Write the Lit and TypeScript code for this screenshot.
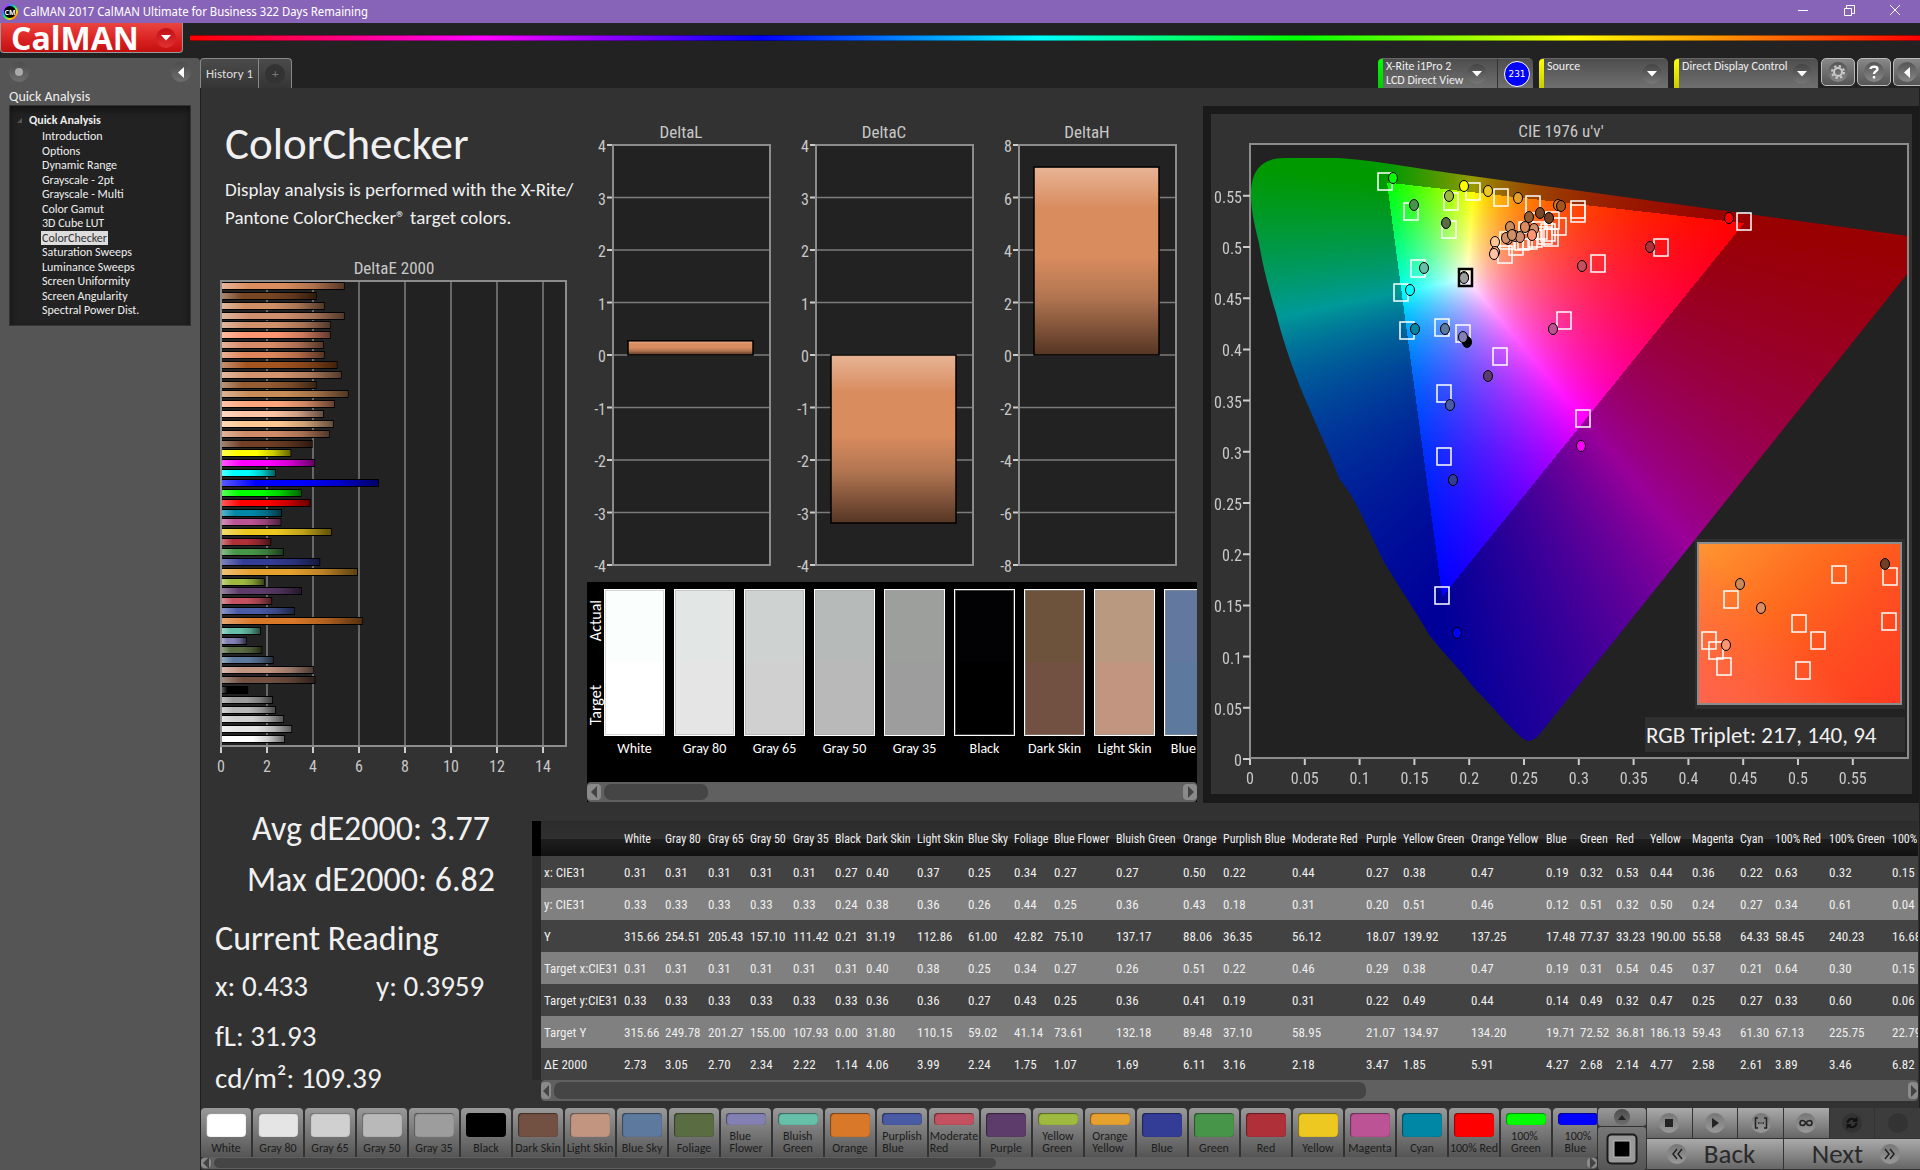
import { LitElement, html, svg, css } from "lit";
import { customElement, query } from "lit/decorators.js";

type Swatch = { name: string; color: string; actual?: string; short?: boolean };

const PATCHES: Swatch[] = [
  { name: "White", color: "#ffffff", actual: "#fafffe" },
  { name: "Gray 80", color: "#e5e5e5", actual: "#e2e6e4" },
  { name: "Gray 65", color: "#d0d0d0", actual: "#ced2d0" },
  { name: "Gray 50", color: "#b9b9b9", actual: "#b6bbb9" },
  { name: "Gray 35", color: "#9d9d9d", actual: "#9d9f9d" },
  { name: "Black", color: "#000000", actual: "#020204" },
  { name: "Dark Skin", color: "#735142", actual: "#6d533c" },
  { name: "Light Skin", color: "#c29580", actual: "#b99a80" },
  { name: "Blue Sky", color: "#5d7a9e", actual: "#63789f" },
  { name: "Foliage", color: "#5a6c42" },
  { name: "Blue Flower", color: "#8380b4", short: true },
  { name: "Bluish Green", color: "#65bfa9", short: true },
  { name: "Orange", color: "#d97829" },
  { name: "Purplish Blue", color: "#4a5ba6", short: true },
  { name: "Moderate Red", color: "#c35160", short: true },
  { name: "Purple", color: "#5d3b6b" },
  { name: "Yellow Green", color: "#9ebb3f", short: true },
  { name: "Orange Yellow", color: "#e7a12f", short: true },
  { name: "Blue", color: "#333d96" },
  { name: "Green", color: "#479548" },
  { name: "Red", color: "#b03039" },
  { name: "Yellow", color: "#edc821" },
  { name: "Magenta", color: "#bc5395" },
  { name: "Cyan", color: "#0087a6" },
  { name: "100% Red", color: "#ff0000" },
  { name: "100% Green", color: "#00ff00", short: true },
  { name: "100% Blue", color: "#0000ff", short: true },
];

const COL_WIDTHS = [80, 41, 43, 42, 43, 42, 31, 51, 51, 46, 40, 62, 67, 40, 69, 74, 37, 68, 75, 34, 36, 34, 42, 48, 35, 54, 63, 70];
const TABLE_WIDTH = COL_WIDTHS.reduce((a, b) => a + b, 0);

const ROWS: [string, string][] = [
  ["x: CIE31", "0.31 0.31 0.31 0.31 0.31 0.27 0.40 0.37 0.25 0.34 0.27 0.27 0.50 0.22 0.44 0.27 0.38 0.47 0.19 0.32 0.53 0.44 0.36 0.22 0.63 0.32 0.15"],
  ["y: CIE31", "0.33 0.33 0.33 0.33 0.33 0.24 0.38 0.36 0.26 0.44 0.25 0.36 0.43 0.18 0.31 0.20 0.51 0.46 0.12 0.51 0.32 0.50 0.24 0.27 0.34 0.61 0.04"],
  ["Y", "315.66 254.51 205.43 157.10 111.42 0.21 31.19 112.86 61.00 42.82 75.10 137.17 88.06 36.35 56.12 18.07 139.92 137.25 17.48 77.37 33.23 190.00 55.58 64.33 58.45 240.23 16.68"],
  ["Target x:CIE31", "0.31 0.31 0.31 0.31 0.31 0.31 0.40 0.38 0.25 0.34 0.27 0.26 0.51 0.22 0.46 0.29 0.38 0.47 0.19 0.31 0.54 0.45 0.37 0.21 0.64 0.30 0.15"],
  ["Target y:CIE31", "0.33 0.33 0.33 0.33 0.33 0.33 0.36 0.36 0.27 0.43 0.25 0.36 0.41 0.19 0.31 0.22 0.49 0.44 0.14 0.49 0.32 0.47 0.25 0.27 0.33 0.60 0.06"],
  ["Target Y", "315.66 249.78 201.27 155.00 107.93 0.00 31.80 110.15 59.02 41.14 73.61 132.18 89.48 37.10 58.95 21.07 134.97 134.20 19.71 72.52 36.81 186.13 59.43 61.30 67.13 225.75 22.79"],
  ["ΔE 2000", "2.73 3.05 2.70 2.34 2.22 1.14 4.06 3.99 2.24 1.75 1.07 1.69 6.11 3.16 2.18 3.47 1.85 5.91 4.27 2.68 2.14 4.77 2.58 2.61 3.89 3.46 6.82"],
];

const NAV = ["Introduction", "Options", "Dynamic Range", "Grayscale - 2pt", "Grayscale - Multi", "Color Gamut", "3D Cube LUT", "ColorChecker", "Saturation Sweeps", "Luminance Sweeps", "Screen Uniformity", "Screen Angularity", "Spectral Power Dist."];

const BARS: [number, string][] = [
  [5.33, "#db8d60"], [4.11, "#784624"], [4.46, "#cf9068"], [5.33, "#cf8f6e"], [4.72, "#d0906c"], [4.72, "#ff9672"],
  [4.42, "#d68a68"], [4.46, "#dd865c"], [5.02, "#a3541f"], [5.2, "#d4946f"], [4.11, "#945c32"], [5.5, "#c88c58"],
  [4.9, "#ffa67c"], [4.42, "#ffc6a6"], [4.85, "#ffc893"], [4.68, "#d08c68"], [3.94, "#703f26"], [3.01, "#ffff00"],
  [4.05, "#ff00ff"], [2.33, "#00ffff"], [6.82, "#0000ff"], [3.46, "#00ff00"], [3.85, "#ff0000"], [2.61, "#0087a6"],
  [2.58, "#bc5395"], [4.77, "#edc821"], [2.14, "#b03039"], [2.68, "#479548"], [4.27, "#333d96"], [5.91, "#e7a12f"],
  [1.85, "#9ebb3f"], [3.47, "#5d3b6b"], [2.18, "#c35160"], [3.16, "#4a5ba6"], [6.11, "#d97829"], [1.69, "#65bfa9"],
  [1.07, "#8380b4"], [1.75, "#5a6c42"], [2.24, "#5d7a9e"], [3.99, "#c29580"], [4.06, "#735142"], [1.14, "#000000"],
  [2.22, "#9d9d9d"], [2.34, "#b9b9b9"], [2.7, "#d0d0d0"], [3.05, "#e5e5e5"], [2.73, "#ffffff"],
];

const TARGETS: [number, number][] = [
  [1385, 181], [1473, 191], [1501, 197], [1451, 201], [1411, 211], [1449, 229], [1418, 268], [1401, 292], [1407, 330],
  [1442, 327], [1463, 333], [1500, 356], [1444, 393], [1444, 456], [1583, 418], [1564, 320], [1598, 263], [1661, 247],
  [1744, 221], [1442, 595], [1533, 204], [1578, 209], [1578, 213], [1559, 226], [1552, 220], [1551, 237], [1548, 232],
  [1545, 235], [1540, 230], [1535, 238], [1530, 240], [1525, 240], [1522, 241], [1516, 246], [1507, 240], [1505, 254], [1526, 230],
];

const READINGS: [number, number, string][] = [
  [1393, 178, "#00ff00"], [1464, 186, "#ffff00"], [1488, 191, "#edc821"], [1449, 196, "#9ebb3f"], [1414, 205, "#479548"],
  [1446, 223, "#5a6c42"], [1518, 198, "#e7a12f"], [1558, 205, "#d97829"], [1561, 206, "#a3541f"], [1529, 217, "#945c32"],
  [1540, 213, "#784624"], [1549, 218, "#703f26"], [1510, 227, "#c88c58"], [1534, 229, "#d0906c"], [1525, 227, "#db8d60"],
  [1532, 235, "#ff9672"], [1508, 239, "#d68a68"], [1506, 238, "#cf9068"], [1515, 236, "#d4946f"], [1520, 237, "#cf8f6e"],
  [1512, 235, "#cf9068"], [1495, 242, "#ffc893"], [1495, 252, "#ffa67c"], [1494, 254, "#ffc6a6"], [1582, 266, "#c35160"],
  [1650, 247, "#b03039"], [1729, 218, "#ff0000"], [1424, 268, "#65bfa9"], [1410, 290, "#00ffff"], [1415, 329, "#0087a6"],
  [1445, 329, "#5d7a9e"], [1467, 342, "#000000"], [1463, 337, "#8380b4"], [1488, 376, "#5d3b6b"], [1553, 329, "#bc5395"],
  [1450, 405, "#4a5ba6"], [1453, 480, "#333d96"], [1581, 446, "#ff00ff"], [1457, 633, "#0000ff"], [1464, 277, "#b9b9b9"], [1464, 278, "#9d9d9d"],
];

const INSET_TARGETS: [number, number][] = [
  [1839, 574], [1890, 576], [1731, 599], [1799, 623], [1818, 640], [1889, 621], [1709, 640], [1716, 650], [1724, 666], [1803, 670],
];
const INSET_READINGS: [number, number, string][] = [
  [1885, 564, "#703f26"], [1740, 584, "#c88c58"], [1761, 608, "#db8d60"], [1726, 645, "#ff9672"],
];

const target = ([x, y]: [number, number]) => svg`<rect x=${x - 7} y=${y - 8} width="14" height="17" fill="none" stroke="#fff" stroke-width="1.500"/>`;
const reading = ([x, y, c]: [number, number, string]) => svg`<ellipse cx=${x} cy=${y} rx="4.500" ry="5.500" fill=${c} stroke="#000" stroke-width="1"/>`;

/** Plots the u'v' chromaticity field inside the spectral locus. */
@customElement("chroma-field")
export class ChromaField extends LitElement {
  static styles = css`
    :host { display: block; width: 100%; height: 100%; }
    canvas { display: block; width: 100%; height: 100%; }
  `;
  @query("canvas") canvas!: HTMLCanvasElement;

  render() {
    return html`<canvas width="658" height="613"></canvas>`;
  }

  firstUpdated() {
    const w = 658, h = 613;
    const ctx = this.canvas.getContext("2d")!;
    const img = ctx.createImageData(w, h);
    for (let j = 0; j < h; j++) {
      for (let i = 0; i < w; i++) {
        const u = (i + 0.5) / 1096;
        const v = (h - j) / 1024;
        const d = 6 * u - 16 * v + 12;
        const x = (9 * u) / d, y = (4 * v) / d, z = 1 - x - y;
        const rgb = [
          3.2406 * x - 1.5372 * y - 0.4986 * z,
          -0.9689 * x + 1.8758 * y + 0.0415 * z,
          0.0557 * x - 0.204 * y + 1.057 * z,
        ];
        const max = Math.max(...rgb);
        const k = (Math.min(...rgb) < 0 ? 153 : 255) / max;
        const o = (j * w + i) * 4;
        rgb.forEach((c, n) => (img.data[o + n] = Math.max(0, c) * k));
        img.data[o + 3] = 255;
      }
    }
    ctx.putImageData(img, 0, 0);
    ctx.globalCompositeOperation = "destination-in";
    ctx.fill(new Path2D("M1 50 C1 26 11 13 35 13 H88 C120 15 160 22 200 28 L658 91 V128 L289 590 Q282 598 275 595 C262 586 238 556 225 544 C208 522 190 504 180 491 C164 464 148 440 134 417 C118 384 104 350 90 335 C80 310 68 284 60 265 C46 234 34 200 26 168 C16 134 12 116 9 98 C4 78 1 64 1 50 Z"));
  }
}

@customElement("app-root")
export class AppRoot extends LitElement {
  static styles = css`
    :host { display: flex; flex-direction: column; min-height: 100vh; background: #222; color: #eee; font-family: Carlito, Calibri, sans-serif; font-size: 13px; overflow: hidden; }
    * { box-sizing: border-box; }
    button { font: inherit; color: inherit; border: 0; padding: 0; margin: 0; background: none; display: flex; align-items: center; justify-content: center; }
    svg { display: block; }
    a { color: inherit; text-decoration: none; }
    h1, h2, p, ul { margin: 0; padding: 0; font-weight: 400; }

    .titlebar { display: flex; align-items: center; height: 23px; background: #8864b8; color: #fff; font: 12px/23px "Noto Sans Display", "Open Sans", sans-serif; padding: 0 2px; }
    .titlebar h1 { font-size: 12px; flex: 1; margin-left: 5px; }
    .titlebar button { width: 46px; height: 23px; padding-bottom: 3px; }

    .brandbar { display: flex; height: 35px; gap: 7px; }
    .brand { width: 183px; height: 30px; padding: 0 6px 0 10px; justify-content: space-between; background: linear-gradient(#ea4540, #d92020 60%, #c41010); border: 1px solid #999; border-top: 0; border-radius: 0 0 4px 4px; color: #fff; font: 700 32px/29px "Open Sans", sans-serif; }
    .brand .round { background: linear-gradient(#c01018, #e03030); }
    .rainbow { flex: 1; height: 6px; margin-top: 12px; border: solid #0006; border-width: 1px 0; background: linear-gradient(90deg, #f00, #f0f 17%, #00f 33%, #0ff 49%, #0f0 64%, #ff0 80%, #f00); }

    .body { flex: 1; display: flex; min-height: 0; }
    .sidebar { width: 200px; flex: none; background: #555; border-radius: 0 4px 0 0; padding: 4px 9px; }
    .sidetop { display: flex; justify-content: space-between; }
    .round { width: 20px; height: 20px; flex: none; border-radius: 50%; background: linear-gradient(#4c4c4c, #6e6e6e); display: grid; place-items: center; }
    .sidebar h2 { font-size: 14px; line-height: 16px; margin-top: 7px; }
    .tree { background: #222; box-shadow: inset 0 0 0 1px #333, inset 0 4px 8px #111; height: 221px; padding: 7px 0 8px 8px; }
    .tree b { display: flex; align-items: center; gap: 7px; font-size: 12px; line-height: 16px; }
    .tree ul { list-style: none; display: grid; grid-auto-rows: 1fr; height: 190px; padding: 1px 0 0 24px; font-size: 12px; line-height: 14px; }
    .tree a { padding: 0 1px; display: inline-block; }
    .tree a.on { background: #ddd; color: #333; }

    .main { flex: 1; min-width: 0; display: flex; flex-direction: column; }
    .strip { display: flex; height: 30px; align-items: stretch; justify-content: space-between; }
    .tabs { display: flex; border: 1px solid #888; border-bottom: 0; border-radius: 4px 4px 0 0; background: linear-gradient(#4b4b4b, #353535); color: #ddd; font-size: 13px; }
    .tabs button { padding: 0 5px; }
    .tabs button + button { width: 33px; border-left: 1px solid #888; }
    .tabs .round { background: #333; color: #777; }
    .devices { display: flex; gap: 6px; }
    .device { display: flex; background: linear-gradient(#4e4e4e, #707070); border-radius: 5px 5px 0 0; border-top: 1px solid #666; padding-right: 6px; font-size: 12px; line-height: 14px; white-space: nowrap; }
    .device > button { flex: 1; align-items: flex-start; justify-content: space-between; text-align: left; padding-left: 3px; }
    .device .round { background: linear-gradient(#444, #777); margin-top: 5px; }
    .device::before { content: ""; width: 5px; border-radius: 4px 0 0 0; background: linear-gradient(#0f0, #0c0); }
    .yellow::before { background: linear-gradient(#ff0, #cc0); }
    .meter { width: 155px; padding-right: 3px; }
    .source { width: 129px; }
    .control { width: 144px; }
    .count { border-left: 1px solid #333; margin-left: 10px; padding-left: 6px; display: flex; align-items: center; }
    .count span { width: 26px; height: 26px; border-radius: 50%; border: 1px solid #fff; background: #00f; color: #fff; font: 9px/24px "DejaVu Sans", sans-serif; text-align: center; }
    .tools { display: flex; gap: 2px; margin-left: -3px; }
    .tools button { width: 34px; height: 28px; border: 1px solid #bbb; border-radius: 5px; background: linear-gradient(#888, #555); }
    .tools button:last-child { width: 27px; border-right: 0; border-radius: 5px 0 0 5px; }
    .tools .round { background: linear-gradient(#555, #888); }

    .panel { flex: 1; background: #323232; border: solid #1e1e1e; border-width: 0 1px; }
    .upper { display: grid; grid-template-columns: 377fr 622fr 719fr; }
    .intro { padding: 29px 0 8px 24px; color: #f0f0f0; }
    .intro h2 { font-size: 45px; line-height: 54px; }
    .intro p { font-size: 19px; line-height: 28px; margin-top: 5px; }
    .chart { width: 100%; height: auto; }
    .chart text { font: 16px "Roboto Condensed", Carlito, sans-serif; fill: #c8c8c8; }
    .chart .title { font-size: 17px; }
    .chart .big { font: 23px Carlito, sans-serif; fill: #f0f0f0; }
    .mid { padding-top: 22px; min-width: 0; }
    .compare { margin: 0 3px 0 9px; background: #000; }
    .patches { display: flex; height: 200px; padding-top: 7px; gap: 9px; overflow: hidden; }
    .sides { flex: none; width: 17px; margin-right: -9px; height: 147px; padding: 11px 0; display: flex; flex-direction: column; justify-content: space-between; align-items: center; font-size: 16px; line-height: 17px; color: #fff; }
    .sides span { writing-mode: vertical-rl; transform: rotate(180deg); }
    .patch { flex: none; width: 61px; text-align: center; white-space: nowrap; font-size: 14px; line-height: 26px; color: #fff; }
    .patch div { height: 147px; border: 1px solid #fff; outline: 1px solid #9996; outline-offset: -2px; }

    .scroll { display: flex; background: #606060; padding: 2px 0; gap: 3px; border-radius: 4px; }
    .scroll button { width: 14px; background: #8a8a8a; border-radius: 4px; color: #444; }
    .scroll .thumb { background: #454545; border-radius: 7px; }
    .scroll .rest { flex: 1; }
    .s20 { height: 20px; } .s21 { height: 21px; } .s12 { height: 12px; padding: 1px 0; }
    .s21 button, .s12 button { width: 10px; }

    .cie { padding: 18px 0 0 3px; }
    .inset { width: 100%; height: 100%; background: linear-gradient(45deg, #ff6450 0, #ff645000 45%), linear-gradient(135deg, #ff9632, #ff6a1e 40%, #ff5020 65%, #ff3a22); }

    .lower { display: grid; grid-template-columns: 331fr 1387fr; }
    .stats { padding-left: 9px; color: #f0f0f0; }
    .stats .sum { font-size: 34px; line-height: 51px; text-align: center; }
    .now { padding-left: 5px; font-size: 29px; line-height: 42px; }
    .now h2 { font-size: 34px; line-height: 48px; margin: 10px 0 2px; }
    .xy { display: grid; grid-template-columns: 161px 1fr; margin-bottom: 8px; }
    .data { padding-top: 18px; min-width: 0; margin-right: 1px; }
    .grid { display: flex; overflow: hidden; }
    .gutter { flex: none; width: 9px; background: linear-gradient(#000 35px, #2a2a2a 35px); }
    table { table-layout: fixed; border-collapse: collapse; flex: none; font: 13px/16px "Roboto Condensed", Carlito, sans-serif; white-space: nowrap; }
    th, td { padding: 2px 0 0 3px; text-align: left; font-weight: 400; height: 32px; color: #eee; }
    thead th { height: 35px; padding-top: 0; font-size: 12px; }
    thead tr { background: linear-gradient(#2c2c2c, #303030 50%, #1e1e1e 51%, #111); }
    tbody tr { background: #424242; }
    tbody tr:nth-child(even) { background: #808080; }
    .data .scroll { margin-left: 9px; }

    .dock { display: flex; height: 62px; background: #333; margin-left: 1px; }
    .list { flex: 1; min-width: 0; overflow: hidden; }
    .chips { display: flex; gap: 2px; height: 49px; overflow: hidden; }
    .chips button { flex: none; width: 50px; flex-direction: column; justify-content: flex-start; gap: 5px; padding-top: 5px; background: linear-gradient(#999, #555); border-radius: 4px 4px 0 0; color: #1c1c1c; font-size: 12px; line-height: 12px; }
    .chips i { display: block; width: 40px; height: 24px; border-radius: 4px; box-shadow: inset 1px 1px 1px #0006, inset 0 0 1px #0008; }
    .chips .short i { height: 12px; }
    .chips span { white-space: nowrap; }
    .chips .short span { white-space: normal; width: min-content; text-align: left; }
    .stack { width: 48px; margin: 0 1px; display: flex; flex-direction: column; gap: 1px; }
    .stack button { background: linear-gradient(#999, #777); border-radius: 3px; height: 18px; }
    .stack button + button { flex: 1; background: linear-gradient(#777, #555); }
    .stack .round { width: 16px; height: 16px; }
    .keys { width: 273px; display: grid; grid-template-columns: repeat(6, 1fr); grid-template-rows: 30px 30px; gap: 1px; color: #2a2a2a; }
    .keys button { background: linear-gradient(#aaa, #666); }
    .keys .round { background: linear-gradient(#777, #999); }
    .keys .off { background: #3c3c3c; }
    .keys .off .round { background: #333; }
    .keys .wide { grid-column: span 3; font-size: 27px; line-height: 28px; gap: 17px; padding-right: 8px; }
    .keys .wide:last-child { padding: 0 0 0 8px; }
  `;

  private scroll(cls: string, thumb: number) {
    return html`<div class="scroll ${cls}">
      <button aria-label="Scroll left"><svg width="7" height="12" viewBox="0 0 7 12"><path d="M6 0V12L0 6Z" fill="#444"/></svg></button>
      <div class="thumb" style="width:${thumb}%"></div><div class="rest"></div>
      <button aria-label="Scroll right"><svg width="7" height="12" viewBox="0 0 7 12"><path d="M1 0V12L7 6Z" fill="#444"/></svg></button>
    </div>`;
  }

  private down() {
    return html`<span class="round"><svg width="10" height="6" viewBox="0 0 10 6"><path d="M0 0H10L5 5.500Z" fill="#fff"/></svg></span>`;
  }

  private deltaE() {
    const px = (v: number) => 221 + v * 23;
    return svg`<svg class="chart" viewBox="201 240 377 550" role="img" aria-label="DeltaE 2000">
      <defs>
        <linearGradient id="shine"><stop offset="0" stop-color="#fff" stop-opacity=".35"/><stop offset=".22" stop-color="#fff" stop-opacity="0"/><stop offset=".5" stop-opacity="0"/><stop offset=".75" stop-opacity=".2"/><stop offset="1" stop-opacity=".6"/></linearGradient>
      </defs>
      <text class="title" x="394" y="274" text-anchor="middle">DeltaE 2000</text>
      <rect x="221" y="281" width="345" height="465" fill="#222"/>
      ${[2, 4, 6, 8, 10, 12, 14].map((v) => svg`<path d="M${px(v)} 281V746" stroke="#808080" stroke-width="1.500"/>`)}
      <rect x="221" y="281" width="345" height="465" fill="none" stroke="#8c8c8c" stroke-width="2"/>
      ${BARS.map(([v, c], i) => {
        const y = Math.round(282 + i * 9.85);
        return svg`<rect x="222" y=${y} width=${v * 23} height="8" fill="#000"/><rect x="222" y=${y + 1} width=${v * 23 - 1} height="6" fill=${c}/><rect x="222" y=${y + 1} width=${v * 23 - 1} height="6" fill="url(#shine)"/>`;
      })}
      ${[0, 2, 4, 6, 8, 10, 12, 14].map((v) => svg`<path d="M${px(v)} 747V753" stroke="#ccc" stroke-width="2"/><text x=${px(v)} y="772" text-anchor="middle">${v}</text>`)}
    </svg>`;
  }

  private deltas() {
    const plot = (x: number, title: string, step: number, val: number) => {
      const len = Math.abs(val / step) * 52.5;
      return svg`
        <text class="title" x=${x + 68} y="138" text-anchor="middle">${title}</text>
        <rect x=${x} y="145" width="157" height="420" fill="#222"/>
        ${[0, 1, 2, 3, 4, 5, 6, 7, 8].map((i) => svg`
          <path d="M${x} ${145 + i * 52.5}h157" stroke="#7c7c7c" stroke-width="1.500"/>
          <path d="M${x - 6} ${145 + i * 52.5}h6" stroke="#ccc" stroke-width="2"/>
          <text x=${x - 7} y=${152 + i * 52.5} text-anchor="end">${(4 - i) * step}</text>`)}
        <rect x=${x} y="145" width="157" height="420" fill="none" stroke="#8c8c8c" stroke-width="2"/>
        <rect x=${x + 15} y=${val > 0 ? 355 - len : 355} width="125" height=${len} fill="url(#clay)" stroke="#000" stroke-width="1.500"/>`;
    };
    return svg`<svg class="chart" viewBox="578 110 622 472" role="img" aria-label="Delta L, C and H">
      <defs><linearGradient id="clay" x2="0" y2="1"><stop offset="0" stop-color="#e8b496"/><stop offset=".22" stop-color="#d98c5e"/><stop offset=".48" stop-color="#d98c5e"/><stop offset=".7" stop-color="#b07450"/><stop offset="1" stop-color="#553524"/></linearGradient></defs>
      ${plot(613, "DeltaL", 1, 0.27)}${plot(816, "DeltaC", 1, -3.2)}${plot(1019, "DeltaH", 2, 7.16)}
    </svg>`;
  }

  private cie() {
    const ticks = [0, 0.05, 0.1, 0.15, 0.2, 0.25, 0.3, 0.35, 0.4, 0.45, 0.5, 0.55];
    return svg`<svg class="chart" viewBox="1203 106 716 697" role="img" aria-label="CIE 1976 chromaticity diagram">
      <rect x="1203" y="106" width="716" height="697" fill="#1a1a1a"/>
      <rect x="1211" y="114" width="701" height="680" fill="#323232"/>
      <text class="title" x="1561" y="137" text-anchor="middle">CIE 1976 u'v'</text>
      <rect x="1250" y="144" width="658" height="614" fill="#222"/>
      <foreignObject x="1250" y="145" width="658" height="613">${html`<chroma-field></chroma-field>`}</foreignObject>
      <rect x="1250" y="144" width="658" height="614" fill="none" stroke="#8c8c8c" stroke-width="2"/>
      ${ticks.map((v) => svg`
        <path d="M1243 ${759 - v * 1024}h7M${1250 + v * 1096} 759v6" stroke="#ccc" stroke-width="2"/>
        <text x="1242" y=${766 - v * 1024} text-anchor="end">${v}</text>
        <text x=${1250 + v * 1096} y="784" text-anchor="middle">${v}</text>`)}
      ${TARGETS.map(target)}
      <rect x="1459" y="269" width="13" height="17" fill="none" stroke="#000" stroke-width="2.500"/>
      ${READINGS.map(reading)}
      <rect x="1695" y="539" width="210" height="170" fill="#2e2e2e"/>
      <foreignObject x="1698" y="543" width="203" height="161">${html`<div class="inset"></div>`}</foreignObject>
      <rect x="1698" y="543" width="203" height="161" fill="none" stroke="#8c8c8c" stroke-width="2"/>
      ${INSET_TARGETS.map(target)}${INSET_READINGS.map(reading)}
      <rect x="1645" y="717" width="260" height="35" fill="#303030"/>
      <text class="big" x="1646" y="743">RGB Triplet: 217, 140, 94</text>
    </svg>`;
  }

  private key(label: string, icon: unknown, cls = "") {
    return html`<button class=${cls} aria-label=${label}><span class="round"><svg width="14" height="14" viewBox="0 0 14 14" fill="none" stroke="#222" stroke-width="1.500">${icon}</svg></span></button>`;
  }

  render() {
    return html`
      <header class="titlebar">
        <svg width="16" height="16" viewBox="0 0 16 16">
          <defs><linearGradient id="ring" x2="1" y2="1"><stop offset="0" stop-color="#f0f"/><stop offset=".3" stop-color="#38f"/><stop offset=".5" stop-color="#0f6"/><stop offset=".75" stop-color="#fd0"/><stop offset="1" stop-color="#f22"/></linearGradient></defs>
          <circle cx="8" cy="8" r="7" fill="#000" stroke="url(#ring)" stroke-width="2"/>
          <text x="8" y="11" font-size="7" font-weight="700" font-family="Open Sans" fill="#fff" text-anchor="middle">CM</text>
        </svg>
        <h1>CalMAN 2017 CalMAN Ultimate for Business 322 Days Remaining</h1>
        <button aria-label="Minimize"><svg width="10" height="10" viewBox="0 0 10 10"><path d="M0 5.500H10" stroke="#fff"/></svg></button>
        <button aria-label="Restore"><svg width="11" height="11" viewBox="0 0 11 11" fill="none" stroke="#fff"><path d="M.5 3.500H7.500V10.500H.5ZM2.500 3V.5H10.500V8.500H8"/></svg></button>
        <button aria-label="Close"><svg width="10" height="10" viewBox="0 0 10 10"><path d="M0 0L10 10M10 0L0 10" stroke="#fff"/></svg></button>
      </header>
      <div class="brandbar">
        <button class="brand">CalMAN <span class="round"><svg width="10" height="6" viewBox="0 0 10 6"><path d="M0 0H10L5 5.500Z" fill="#fff"/></svg></span></button>
        <div class="rainbow"></div>
      </div>
      <div class="body">
        <nav class="sidebar">
          <div class="sidetop">
            <button class="round" aria-label="Record"><svg width="8" height="8"><circle cx="4" cy="4" r="4" fill="#aaa"/></svg></button>
            <button class="round" aria-label="Collapse"><svg width="6" height="11" viewBox="0 0 6 11"><path d="M6 0V11L0 5.500Z" fill="#fff"/></svg></button>
          </div>
          <h2>Quick Analysis</h2>
          <div class="tree">
            <b><svg width="5" height="5"><path d="M5 0V5H0Z" fill="#555"/></svg>Quick Analysis</b>
            <ul>${NAV.map((n) => html`<li><a href="#" class=${n === "ColorChecker" ? "on" : ""}>${n}</a></li>`)}</ul>
          </div>
        </nav>
        <main class="main">
          <div class="strip">
            <div class="tabs"><button>History 1</button><button aria-label="Add"><span class="round">+</span></button></div>
            <div class="devices">
              <div class="device meter"><button><span>X-Rite i1Pro 2<br>LCD Direct View</span>${this.down()}</button><div class="count"><span>231</span></div></div>
              <div class="device source yellow"><button><span>Source</span>${this.down()}</button></div>
              <div class="device control yellow"><button><span>Direct Display Control</span>${this.down()}</button></div>
              <div class="tools">
                <button aria-label="Settings"><span class="round"><svg width="16" height="16" viewBox="0 0 16 16" fill="none" stroke="#ccc"><circle cx="8" cy="8" r="4" stroke-width="2"/><circle cx="8" cy="8" r="6" stroke-width="2" stroke-dasharray="2.360"/></svg></span></button>
                <button aria-label="Help"><span class="round"><svg width="10" height="14" viewBox="0 0 10 14" fill="none" stroke="#fff" stroke-width="2.400"><path d="M1.500 4C1.500 1 8.500 1 8.500 4C8.500 6.500 5 6 5 9M5 11V13.500"/></svg></span></button>
                <button aria-label="Hide"><span class="round"><svg width="6" height="11" viewBox="0 0 6 11"><path d="M6 0V11L0 5.500Z" fill="#fff"/></svg></span></button>
              </div>
            </div>
          </div>
          <div class="panel">
            <div class="upper">
              <section>
                <div class="intro"><h2>ColorChecker</h2><p>Display analysis is performed with the X-Rite/<br>Pantone ColorChecker® target colors.</p></div>
                ${this.deltaE()}
              </section>
              <section class="mid">
                ${this.deltas()}
                <div class="compare">
                  <div class="patches">
                    <div class="sides"><span>Actual</span><span>Target</span></div>
                    ${PATCHES.slice(0, 9).map((p) => html`<div class="patch"><div style="background:linear-gradient(${p.actual} 50%,${p.color} 50%)"></div>${p.name}</div>`)}
                  </div>
                  ${this.scroll("s20", 17)}
                </div>
              </section>
              <section class="cie">${this.cie()}</section>
            </div>
            <div class="lower">
              <section class="stats">
                <p class="sum">Avg dE2000: 3.77</p>
                <p class="sum">Max dE2000: 6.82</p>
                <div class="now">
                  <h2>Current Reading</h2>
                  <div class="xy"><span>x: 0.433</span><span>y: 0.3959</span></div>
                  <p>fL: 31.93</p>
                  <p>cd/m²: 109.39</p>
                </div>
              </section>
              <section class="data">
                <div class="grid">
                  <div class="gutter"></div>
                  <table style="width:${TABLE_WIDTH}px">
                    <colgroup>${COL_WIDTHS.map((w) => html`<col style="width:${w}px">`)}</colgroup>
                    <thead><tr><th></th>${PATCHES.map((p) => html`<th scope="col">${p.name}</th>`)}</tr></thead>
                    <tbody>${ROWS.map(([label, vals]) => html`<tr><th scope="row">${label}</th>${vals.split(" ").map((v) => html`<td>${v}</td>`)}</tr>`)}</tbody>
                  </table>
                </div>
                ${this.scroll("s21", 59)}
              </section>
            </div>
          </div>
          <footer class="dock">
            <div class="list">
              <div class="chips">${PATCHES.map((p) => html`<button class=${p.short ? "short" : ""}><i style="background:${p.color}"></i><span>${p.name}</span></button>`)}</div>
              ${this.scroll("s12", 56)}
            </div>
            <div class="stack">
              <button aria-label="Expand"><span class="round"><svg width="8" height="5"><path d="M0 5H8L4 0Z" fill="#222"/></svg></span></button>
              <button aria-label="Window pattern"><svg width="32" height="32" viewBox="0 0 32 32"><rect x="1.500" y="1.500" width="29" height="29" rx="4" fill="#999" stroke="#1a1a1a" stroke-width="2"/><rect x="8" y="8" width="16" height="16" fill="#000" stroke="#bbb"/></svg></button>
            </div>
            <div class="keys">
              ${this.key("Stop", svg`<path d="M3 3H11V11H3Z" fill="#222" stroke="none"/>`)}
              ${this.key("Play", svg`<path d="M4 2V12L11 7Z" fill="#222" stroke="none"/>`)}
              ${this.key("Series", svg`<path d="M4 2H1.500V12H4M10 2H12.500V12H10M4 7H5.500M6.500 7H7.500M8.500 7H10"/>`)}
              ${this.key("Continuous", svg`<path d="M7 7C5.500 4.500 4.500 4.500 3.500 4.500A2.500 2.500 0 0 0 3.500 9.500C4.500 9.500 5.500 9.500 7 7C8.500 4.500 9.500 4.500 10.500 4.500A2.500 2.500 0 0 1 10.500 9.500C9.500 9.500 8.500 9.500 7 7Z"/>`)}
              ${this.key("Repeat", svg`<path d="M2.500 7A4.500 4.500 0 0 1 10.500 4.500M11.500 7A4.500 4.500 0 0 1 3.500 9.500M11.500 1.500V5H8M2.500 12.500V9H6" stroke="#111" stroke-width="2"/>`, "off")}
              ${this.key("None", "", "off")}
              <button class="wide"><span class="round"><svg width="12" height="12" viewBox="0 0 12 12" fill="none" stroke="#222" stroke-width="1.500"><path d="M6 1L2 6L6 11M11 1L7 6L11 11"/></svg></span>Back</button>
              <button class="wide">Next<span class="round"><svg width="12" height="12" viewBox="0 0 12 12" fill="none" stroke="#222" stroke-width="1.500"><path d="M1 1L5 6L1 11M6 1L10 6L6 11"/></svg></span></button>
            </div>
          </footer>
        </main>
      </div>`;
  }
}
